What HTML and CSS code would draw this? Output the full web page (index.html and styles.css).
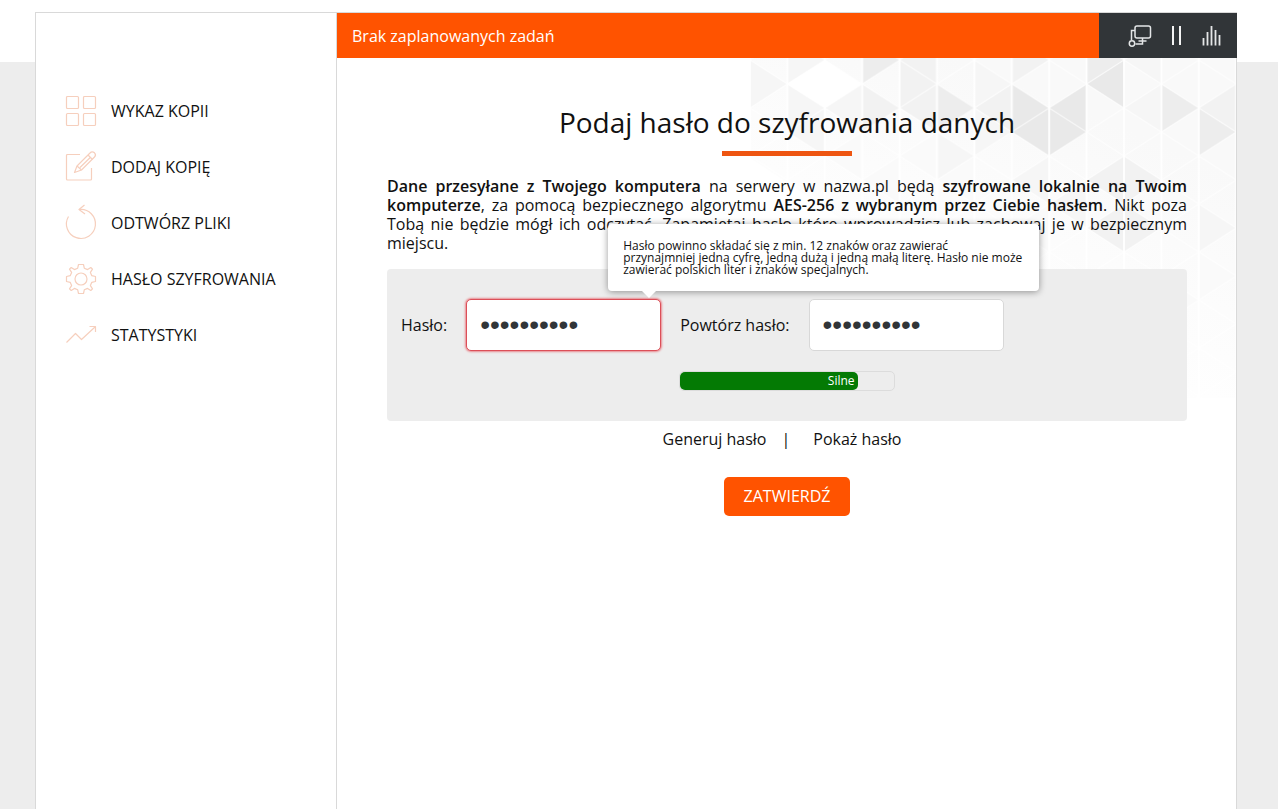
FILE: index.html
```html
<!DOCTYPE html>
<html lang="pl">
<head>
<meta charset="utf-8">
<meta name="viewport" content="width=device-width, initial-scale=1">
<title>Hasło szyfrowania</title>
<link rel="stylesheet" href="styles.css">
</head>
<body>
<div class="app">
  <nav class="sidebar">
    <a class="nav-link" href="#kopie">
      <svg class="nav-icon" viewBox="0 0 30 30"><rect x=".5" y=".5" width="12" height="12" rx="1"/><rect x="17.500" y=".5" width="12" height="12" rx="1"/><rect x=".5" y="17.500" width="12" height="12" rx="1"/><rect x="17.500" y="17.500" width="12" height="12" rx="1"/></svg>
      WYKAZ KOPII
    </a>
    <a class="nav-link" href="#dodaj">
      <svg class="nav-icon" viewBox="0 0 30 30"><path d="M14 2.500H1.500Q.5 2.500 .5 3.500V27Q.5 28 1.500 28H24.500Q25.500 28 25.500 27V16"/><path d="M8.500 20.500L11 14L24 1Q26-1.200 28.500 .8Q30.500 3 28.500 5L15.500 18Z"/><path d="M22 3L26.500 7.500M11 14L15.500 18M24.500 5.200L14 15.500"/></svg>
      DODAJ KOPIĘ
    </a>
    <a class="nav-link" href="#odtworz">
      <svg class="nav-icon" viewBox="0 0 30 30"><path d="M2.500 8.500A14.500 14.500 0 1 0 13.500 1.500"/><path d="M18.500-3L13 1.500L19 6"/></svg>
      ODTWÓRZ PLIKI
    </a>
    <a class="nav-link" href="#haslo">
      <svg class="nav-icon" viewBox="0 0 30 30"><circle cx="15" cy="15" r="6"/><path d="M12.500 .5H17.500L18.300 4.200L21.600 5.600L24.800 3.500L26.500 5.200L24.400 8.400L25.800 11.700L29.500 12.500V17.500L25.800 18.300L24.400 21.600L26.500 24.800L24.800 26.500L21.600 24.400L18.300 25.800L17.500 29.500H12.500L11.700 25.800L8.400 24.400L5.200 26.500L3.500 24.800L5.600 21.600L4.200 18.300L.5 17.500V12.500L4.200 11.700L5.600 8.400L3.500 5.200L5.200 3.500L8.400 5.600L11.700 4.200Z"/></svg>
      HASŁO SZYFROWANIA
    </a>
    <a class="nav-link" href="#statystyki">
      <svg class="nav-icon" viewBox="0 0 30 30"><path d="M.5 22.500L9.500 13.500L15.500 19.500L29 7M23.500 6.500H29.500V12"/></svg>
      STATYSTYKI
    </a>
  </nav>
  <div class="main">
    <header class="topbar">
      <p class="status">Brak zaplanowanych zadań</p>
      <div class="tools">
        <button class="tool" type="button" aria-label="Urządzenia">
          <svg width="24" height="24" viewBox="0 0 24 24"><g fill="none" stroke="#e4e6e7" stroke-width="1.500"><rect x="7" y="2" width="15.500" height="12" rx="2"/><circle cx="4" cy="19.500" r="2.700"/><path d="M7 6.500H3.500V16M14.500 14V17M10.500 17H18.500M14.500 17V20H7.500"/></g></svg>
        </button>
        <button class="tool" type="button" aria-label="Wstrzymaj">
          <svg width="12" height="24" viewBox="0 0 12 24"><path d="M2 2V21M9 2V21" stroke="#f4f4f4" stroke-width="2"/></svg>
        </button>
        <button class="tool" type="button" aria-label="Statystyki">
          <svg width="20" height="24" viewBox="0 0 20 24"><path d="M1.500 14V21.500M5.500 8V21.500M9.500 2V21.500M13.500 6V21.500M17.500 11V21.500" stroke="#e4e6e7" stroke-width="1.800"/></svg>
        </button>
      </div>
    </header>
    <main class="content">
      <svg class="pattern" viewBox="0 0 486 340" aria-hidden="true">
        <defs>
          <linearGradient id="wash" gradientUnits="userSpaceOnUse" x1="250" y1="300" x2="350" y2="60"><stop offset="0" stop-color="#fff"/><stop offset="1" stop-color="#f9f9f9"/></linearGradient>
          <pattern id="mesh" width="74.800" height="48" patternUnits="userSpaceOnUse" patternTransform="translate(0 2)"><path d="M0 0V48M37.400 0V48M74.800 0V48" fill="none" stroke="#fff" stroke-width="1.800"/><path d="M0 0L74.800 48M0 48L74.800 0" fill="none" stroke="#fff" stroke-opacity=".6" stroke-width="1.200"/></pattern>
        </defs>
        <path fill="url(#wash)" d="M0 0H486V340H411L150 200L0 100Z"/>
        <g fill="#e9e9e9">
          <path d="M262 26L299 50L262 74ZM299 50L337 26V74ZM299 50L337 74L299 98ZM262 74L299 50V98ZM337 26L374 2V50Z"/>
        </g>
        <g fill="#ededed">
          <path d="M411 26L449 50L411 74ZM449 50L486 74L449 98ZM187 26L225 50L187 74ZM112 26L150 2L112 -22ZM337 -22L374 2L337 26Z"/>
        </g>
        <g fill="#f2f2f2">
          <path d="M374 98L411 122L374 146ZM337 122L374 98V146ZM337 170L374 146V194ZM374 146L411 170L374 194ZM150 2L187 26L150 50ZM150 2L187 -22V26ZM150 50L187 26V74ZM112 26L150 50L112 74ZM225 50L262 26V74ZM449 50L486 26V74ZM262 -22L299 2L262 26Z"/>
        </g>
        <g fill="#f6f6f6">
          <path d="M0 2L37 26L0 50ZM37 26L75 2L37 -22ZM37 26L75 50L37 74ZM37 74L75 50V98ZM75 50L112 26V74ZM225 2L262 26L225 50ZM225 50L262 74L225 98ZM187 74L225 98L187 122ZM374 2L411 -22V26ZM374 50L411 26V74ZM449 146L486 170L449 194ZM262 122L299 98V146ZM299 146L337 122V170Z"/>
        </g>
        <g fill="#fafafa">
          <path d="M75 98L112 74V122ZM112 122L150 98V146ZM150 98L187 74V122ZM187 122L225 98V146ZM262 170L299 146V194ZM449 194L486 218L449 242ZM411 218L449 242L411 266Z"/>
        </g>
        <path fill="#fff" d="M37 26L75 2L112 26L75 50Z"/>
        <rect width="486" height="340" fill="url(#mesh)"/>
      </svg>
      <h1 class="title">Podaj hasło do szyfrowania danych</h1>
      <p class="intro"><b>Dane przesyłane z Twojego komputera</b> na serwery w nazwa.pl będą <b>szyfrowane lokalnie na Twoim komputerze</b>, za pomocą bezpiecznego algorytmu <b>AES-256 z wybranym przez Ciebie hasłem</b>. Nikt poza Tobą nie będzie mógł ich odczytać. Zapamiętaj hasło które wprowadzisz lub zachowaj je w bezpiecznym miejscu.</p>
      <form class="form">
        <div class="panel">
          <div class="fields">
            <label for="pass">Hasło:</label>
            <div class="field">
              <input class="input invalid" id="pass" type="password" value="abcdefghij" aria-describedby="hint">
              <div class="tooltip" id="hint" role="tooltip">Hasło powinno składać się z min. 12 znaków oraz zawierać<br>przynajmniej jedną cyfrę, jedną dużą i jedną małą literę. Hasło nie może zawierać polskich liter i znaków specjalnych.</div>
            </div>
            <label for="repeat">Powtórz hasło:</label>
            <div class="field">
              <input class="input" id="repeat" type="password" value="abcdefghij">
            </div>
          </div>
          <div class="strength"><div class="strength-fill">Silne</div></div>
        </div>
        <div class="links">
          <a href="#generuj">Generuj hasło</a><span class="divider">|</span><a href="#pokaz">Pokaż hasło</a>
        </div>
        <button class="submit" type="submit">ZATWIERDŹ</button>
      </form>
    </main>
  </div>
</div>
</body>
</html>
```

FILE: styles.css
```css
* {
  box-sizing: border-box;
}

body {
  margin: 0;
  min-height: 100vh;
  padding: 12px 41px 0 35px;
  display: flex;
  background: linear-gradient(#fff 62px, #ededed 62px);
  color: #111;
  font: 16px/19px "Open Sans", sans-serif;
}

a {
  color: inherit;
  text-decoration: none;
}

.app {
  flex: 1;
  display: flex;
  background: #fff;
  border: 1px solid #d9d9d9;
  border-bottom: 0;
}

.sidebar {
  flex: 0 0 301px;
  display: flex;
  flex-direction: column;
  gap: 26px;
  padding: 83px 30px 0;
  border-right: 1px solid #d9d9d9;
}

.nav-link {
  display: flex;
  align-items: center;
  gap: 15px;
  height: 30px;
  white-space: nowrap;
}

.nav-icon {
  flex: none;
  width: 30px;
  height: 30px;
  overflow: visible;
  fill: none;
  stroke: #f6cfbd;
  stroke-width: 1.2;
  stroke-linejoin: round;
}

.main {
  flex: 1;
  min-width: 0;
  display: flex;
  flex-direction: column;
}

.topbar {
  display: flex;
  height: 45px;
  margin-right: -1px;
}

.status {
  flex: 1;
  margin: 0;
  padding: 14px 15px 12px;
  background: #ff5300;
  color: #fff;
}

.tools {
  display: flex;
  align-items: center;
  justify-content: space-between;
  width: 138px;
  padding: 0 15px 0 29px;
  background: #313538;
}

.tool {
  display: flex;
  padding: 0;
  border: 0;
  background: none;
}

.content {
  flex: 1;
  position: relative;
  padding: 44px 49px 0 50px;
}

.pattern {
  position: absolute;
  top: 0;
  right: 0;
  width: 486px;
  height: 340px;
}

.title {
  position: relative;
  display: flex;
  flex-direction: column;
  align-items: center;
  gap: 8px;
  margin: 0 0 21px;
  font-size: 28px;
  font-weight: 400;
  line-height: 41px;
}

.title::after {
  content: "";
  width: 130px;
  height: 5px;
  background: #ee5511;
}

.intro {
  position: relative;
  margin: 0 0 16px;
  text-align: justify;
}

.intro b {
  font-weight: 600;
}

.form {
  position: relative;
  display: flex;
  flex-direction: column;
  align-items: center;
}

.panel {
  width: 100%;
  padding: 30px 14px;
  border-radius: 4px;
  background: #ededed;
}

.fields {
  display: flex;
  align-items: center;
  gap: 19px;
}

.field {
  position: relative;
}

.input {
  display: block;
  width: 195px;
  height: 52px;
  padding: 0 13px;
  border: 1px solid #d8d8d8;
  border-radius: 5px;
  background: #fff;
  color: #313538;
  font: 28px "Liberation Sans", sans-serif;
}

.invalid {
  border-color: #dc4f58;
  box-shadow: 0 0 2px 1px #e98a90;
}

.tooltip {
  position: absolute;
  left: 142px;
  bottom: 60px;
  z-index: 1;
  width: 431px;
  padding: 16px 14px 15px 15px;
  border-radius: 4px;
  background: #fff;
  box-shadow: 0 1px 7px rgba(0, 0, 0, .4);
  font-size: 12px;
  line-height: 12px;
}

.tooltip::after {
  content: "";
  position: absolute;
  top: 100%;
  left: 34px;
  border: 7px solid transparent;
  border-top-color: #fff;
  border-bottom: 0;
}

.strength {
  width: 216px;
  height: 20px;
  margin: 20px auto 0;
  border: 1px solid #dcdcdc;
  border-radius: 5px;
}

.strength-fill {
  width: 83%;
  height: 18px;
  padding-right: 3px;
  border-radius: 5px;
  background: #047a04;
  color: #fff;
  font-size: 12px;
  line-height: 18px;
  text-align: right;
}

.links {
  display: flex;
  margin: 9px 0 28px;
  padding-right: 10px;
}

.divider {
  padding: 0 23px 0 15px;
}

.submit {
  height: 39px;
  padding: 0 20px;
  border: 0;
  border-radius: 5px;
  background: #ff5300;
  color: #fff;
  font: 16px/39px "Open Sans", sans-serif;
}
```
